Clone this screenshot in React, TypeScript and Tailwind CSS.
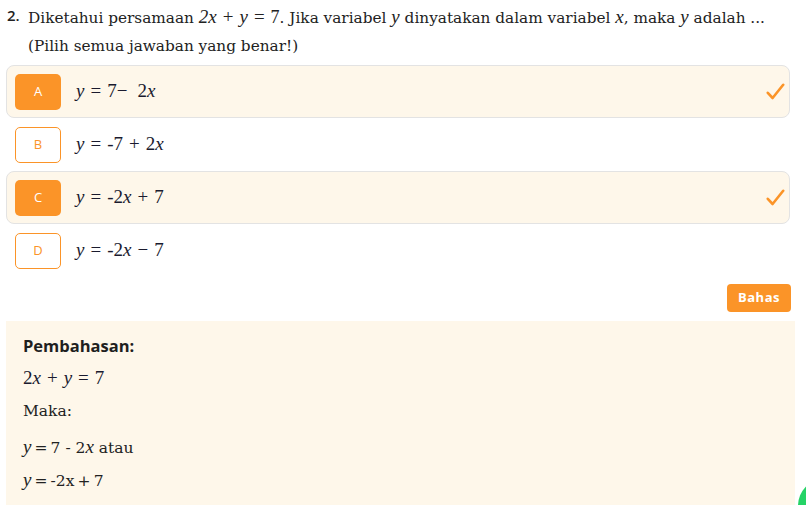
import React from "react";

function M({ children }: { children: React.ReactNode }) {
  return <span className="italic font-['Liberation_Serif',serif] text-[19px]">{children}</span>;
}

function Op({ children }: { children: React.ReactNode }) {
  return <span className="font-['Liberation_Serif',serif] text-[19px] mx-[6px]">{children}</span>;
}

function Check() {
  return (
    <svg width="19" height="17" viewBox="0 0 19 17" fill="none">
      <path d="M1.8 9.8 L6.6 15 L17.2 1.8" stroke="#fb9428" strokeWidth="2.6" strokeLinecap="round" strokeLinejoin="round" />
    </svg>
  );
}

function Option({ letter, selected, children }: { letter: string; selected: boolean; children: React.ReactNode }) {
  return (
    <div
      className={
        selected
          ? "flex items-center h-[53px] pl-[8px] pr-[4px] rounded-[8px] border bg-[#fef7ea] border-[#e3e3e3]"
          : "flex items-center h-[53px] pl-[8px] pr-[4px] rounded-[8px] border bg-white border-transparent"
      }
    >
      <div
        className={
          selected
            ? "w-[46px] h-[36px] rounded-[5px] flex items-center justify-center text-[13px] font-['Open_Sans',sans-serif] bg-[#fb9428] text-white"
            : "w-[46px] h-[36px] rounded-[5px] flex items-center justify-center text-[13px] font-['Open_Sans',sans-serif] bg-white border border-[#fb9428] text-[#fb9428]"
        }
      >
        {letter}
      </div>
      <div className="ml-[15px] flex-1 text-[19px] text-[#1a1a2e] font-['Liberation_Serif',serif]">{children}</div>
      {selected && <Check />}
    </div>
  );
}

export default function App() {
  return (
    <div className="relative w-[806px] h-[505px] overflow-hidden bg-white text-[#222]">
      <div className="flex pl-[7px] pt-[3px] pr-[8px]">
        <div className="w-[21px] text-[15px] font-semibold pt-[1px] font-['Open_Sans',sans-serif]">2.</div>
        <div className="text-[15.3px] leading-[28px] text-[#222] font-['DejaVu_Serif',serif]">
          Diketahui persamaan <M>2x</M>
          <Op>+</Op>
          <M>y</M>
          <Op>=</Op>
          <span className="font-['Liberation_Serif',serif] text-[18px]">7</span>. Jika variabel <M>y</M> dinyatakan dalam
          variabel <M>x</M>, maka <M>y</M> adalah ...
          <br />
          (Pilih semua jawaban yang benar!)
        </div>
      </div>

      <div className="px-[6px] mt-[5px] w-[796px] flex flex-col">
        <Option letter="A" selected>
          <M>y</M>
          <Op>=</Op>7<span className="mr-[10px]">−</span>2<M>x</M>
        </Option>
        <Option letter="B" selected={false}>
          <M>y</M>
          <Op>=</Op>-7
          <Op>+</Op>2<M>x</M>
        </Option>
        <Option letter="C" selected>
          <M>y</M>
          <Op>=</Op>-2<M>x</M>
          <Op>+</Op>7
        </Option>
        <Option letter="D" selected={false}>
          <M>y</M>
          <Op>=</Op>-2<M>x</M>
          <Op>−</Op>7
        </Option>
      </div>

      <div className="flex justify-end pr-[15px] mt-[7px]">
        <button className="w-[64px] h-[28px] rounded-[4px] bg-[#fb9428] text-white text-[13px] font-bold tracking-[0.5px] font-['Open_Sans',sans-serif]">
          Bahas
        </button>
      </div>

      <div className="mx-[6px] mt-[9px] w-[789px] h-[200px] bg-[#fef7ea] pl-[17px] pt-[13px]">
        <div className="text-[16.5px] font-bold text-[#1f1f1f] font-['Open_Sans',sans-serif]">Pembahasan:</div>
        <div className="mt-[5px] text-[19px] text-[#1a1a2e] font-['Liberation_Serif',serif]">
          2<M>x</M>
          <Op>+</Op>
          <M>y</M>
          <Op>=</Op>7
        </div>
        <div className="mt-[8px] text-[15.5px] font-['DejaVu_Serif',serif]">Maka:</div>
        <div className="mt-[9px] text-[15.5px] font-['DejaVu_Serif',serif]">
          <M>y</M>{"\u2009=\u20097 - 2"}
          <M>x</M> atau
        </div>
        <div className="mt-[5px] text-[15.5px] font-['DejaVu_Serif',serif]">
          <M>y</M>
          {"\u2009=\u2009-2x\u2009+\u20097"}
        </div>
      </div>

      <div className="absolute left-[798px] top-[478px] w-[56px] h-[56px] rounded-full bg-[#25d366]" />
    </div>
  );
}
